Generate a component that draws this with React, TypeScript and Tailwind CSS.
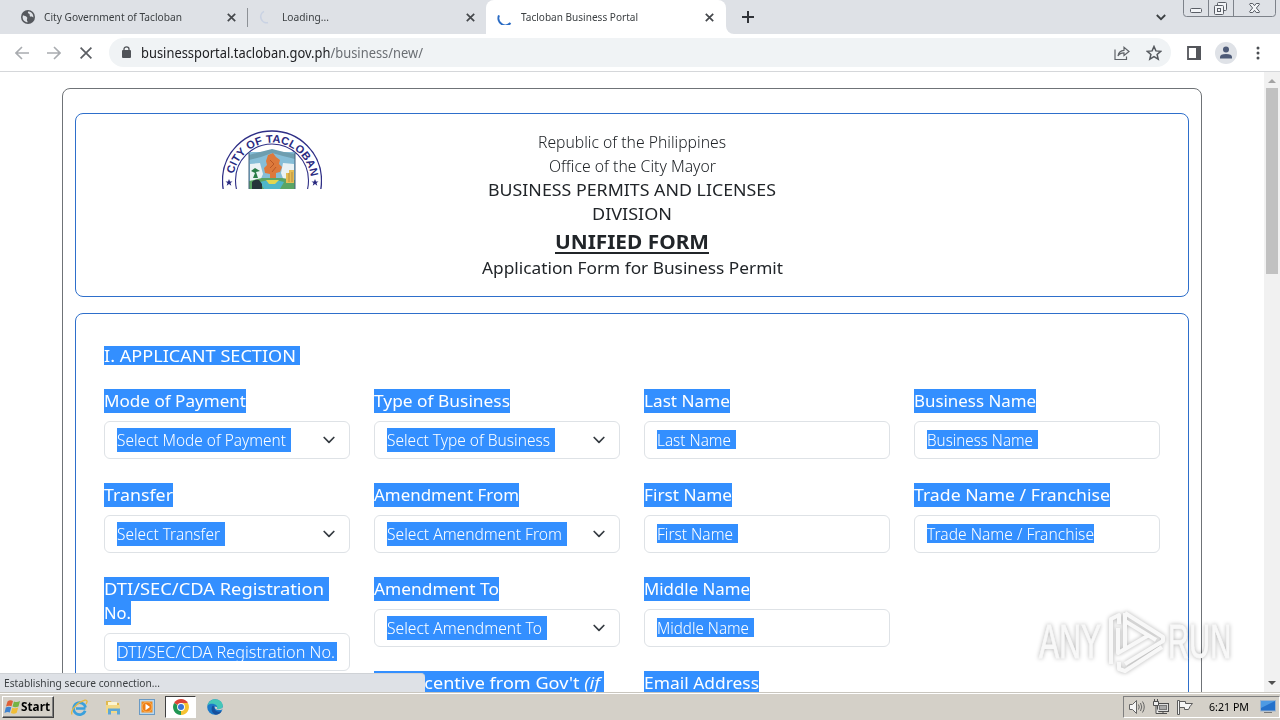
import { useLayoutEffect, useRef, type ReactNode } from "react";

/** One line of text, stretched so that it fills the content width of its box. */
function Fit({ className, children }: { className: string; children: ReactNode }) {
  const box = useRef<HTMLSpanElement>(null);
  const text = useRef<HTMLSpanElement>(null);
  useLayoutEffect(() => {
    const b = box.current;
    const t = text.current;
    if (!b || !t) return;
    t.style.transform = "none";
    const cs = getComputedStyle(b);
    const room = b.clientWidth - parseFloat(cs.paddingLeft) - parseFloat(cs.paddingRight);
    t.style.transform = `scaleX(${room / t.getBoundingClientRect().width})`;
  }, []);
  return (
    <span ref={box} className={`block shrink-0 whitespace-pre ${className}`}>
      <span ref={text} className="inline-block origin-left">{children}</span>
    </span>
  );
}

function CloseX() {
  return (
    <svg className="block h-[9px] w-[9px]" viewBox="0 0 9 9" stroke="#45484c" strokeWidth="1.7" fill="none">
      <path d="M0.8 0.8L8.2 8.2M8.2 0.8L0.8 8.2" />
    </svg>
  );
}

function TabStrip() {
  return (
    <div className="flex h-[34px] shrink-0 bg-[#dee1e6] text-[11.5px] leading-[34px] text-[#3c4043]">
      <div className="flex w-[247px] items-center pl-[21px]">
        <svg className="h-[14px] w-[14px]" viewBox="0 0 14 14">
          <circle cx="7" cy="7" r="7" fill="#55585d" />
          <path d="M2 5.2C3.8 6.2 5 5.8 6 7.2C6.8 8.4 5.5 9 6 10.4L6.8 12.3C3.8 12.4 1.6 9.8 1.6 7ZM7.2 1.6C6.2 3.4 7.6 3.6 8.4 4C9.2 4.6 8.2 5.8 9.4 6.6C10.4 7.4 11.4 6.8 12.4 7.4C12.4 3.6 9.6 1.5 7.2 1.6Z" fill="#dee1e6" />
        </svg>
        <Fit className="ml-[9px] w-[138px]">City Government of Tacloban</Fit>
        <div className="ml-[45px]"><CloseX /></div>
      </div>
      <div className="mt-[8px] h-[19px] w-px bg-[#8d9196]" />
      <div className="flex w-[238px] items-center pl-[11px]">
        <svg className="h-[14px] w-[14px]" viewBox="0 0 14 14" fill="none" stroke="#c9d2e3" strokeWidth="1.6">
          <path d="M5 1.4A6 6 0 0 0 9 12.6" />
        </svg>
        <Fit className="ml-[9px] w-[47px]">Loading...</Fit>
        <div className="ml-[137px]"><CloseX /></div>
      </div>
      <div className="flex w-[240px] items-center rounded-t-[8px] bg-white pl-[11px]">
        <svg className="h-[16px] w-[16px]" viewBox="0 0 16 16" fill="none" stroke="#2a6bc4" strokeWidth="2">
          <path d="M2 6.4A7 7 0 0 0 13.5 14" />
        </svg>
        <Fit className="ml-[8px] w-[117px]">Tacloban Business Portal</Fit>
        <div className="ml-[67px]"><CloseX /></div>
      </div>
      <div className="flex w-[430px] items-center bg-white">
        <div className="flex h-[34px] w-full items-center rounded-bl-[8px] bg-[#dee1e6] pl-[16px]">
          <svg className="h-[12px] w-[12px]" viewBox="0 0 12 12" stroke="#303338" strokeWidth="2">
            <path d="M6 0V12M0 6H12" />
          </svg>
        </div>
      </div>
      <div className="flex items-center bg-[#dee1e6]">
        <svg className="h-[7px] w-[10px]" viewBox="0 0 10 7" fill="none" stroke="#3c4043" strokeWidth="1.8">
          <path d="M0.8 1L5 5.2L9.2 1" />
        </svg>
      </div>
      <svg className="ml-[17px] h-[17px] w-[93px]" viewBox="0 0 93 17" fill="none" stroke="#7d828a">
        <path d="M0.5 0V13.5Q0.5 16.5 3.5 16.5H89.5Q92.5 16.5 92.5 13.5V0M25.5 0V16M50.5 0V16" />
        <g stroke="#5a5e66" fill="#f2f4f7">
          <rect x="7.5" y="8.5" width="11" height="4" rx="1" />
          <rect x="34.5" y="2.5" width="9" height="8" rx="1" />
          <rect x="31.5" y="5.5" width="9" height="9" rx="1" />
          <rect x="34.5" y="8.5" width="3" height="3" />
          <path d="M67 3.500H69.800L71.500 5.700L73.200 3.500H76.200L76.500 4.300L73.400 8L76.500 11.700L76.200 12.500H73.200L71.500 10.300L69.800 12.500H67L66.500 11.700L69.600 8L66.500 4.300Z" />
        </g>
      </svg>
    </div>
  );
}

function Toolbar() {
  return (
    <div className="flex h-[38px] shrink-0 items-center border-b border-[#d5d7da] bg-white pl-[15px]">
      <svg className="h-[14px] w-[14px]" viewBox="0 0 14 14" fill="none" stroke="#a9acb0" strokeWidth="1.6">
        <path d="M14 7H1.200M7 1L1 7L7 13" />
      </svg>
      <svg className="ml-[18px] h-[14px] w-[14px]" viewBox="0 0 14 14" fill="none" stroke="#a9acb0" strokeWidth="1.6">
        <path d="M0 7H12.800M7 1L13 7L7 13" />
      </svg>
      <svg className="ml-[19px] h-[12px] w-[12px]" viewBox="0 0 12 12" fill="none" stroke="#5b5e63" strokeWidth="1.7">
        <path d="M0.600 0.600L11.400 11.400M11.400 0.600L0.600 11.400" />
      </svg>
      <div className="ml-[17px] flex h-[29px] w-[1062px] items-center rounded-full bg-[#f0f3f5] pl-[13px]">
        <svg className="mb-[2px] h-[12px] w-[9px]" viewBox="0 0 9 12">
          <rect y="4" width="9" height="8" rx="1" fill="#505358" />
          <path d="M2 4.500V3A2.500 2.200 0 0 1 7 3V4.500" fill="none" stroke="#505358" strokeWidth="1.300" />
        </svg>
        <Fit className="ml-[10px] w-[282px] text-[14px] leading-[29px] text-[#202124]">
          businessportal.tacloban.gov.ph<span className="text-[#6a6e73]">/business/new/</span>
        </Fit>
        <svg className="ml-[691px] h-[16px] w-[16px]" viewBox="0 0 16 16" fill="none" stroke="#5f6368" strokeWidth="1.200">
          <path d="M1 4.500V14.500H12.500V11.500" />
          <path d="M4 11C4.500 7.500 6.500 5.500 10 5.300V2.300L15 6.500L10 10.500V7.900C7 7.900 5.300 8.800 4 11Z" />
        </svg>
        <svg className="ml-[16px] h-[16px] w-[16px]" viewBox="0 0 16 16" fill="none" stroke="#54585d" strokeWidth="1.500">
          <path d="M8 1.500L9.900 5.900L14.700 6.300L11.100 9.500L12.200 14.200L8 11.700L3.800 14.200L4.900 9.500L1.300 6.300L6.100 5.900Z" />
        </svg>
      </div>
      <svg className="ml-[16px] h-[14px] w-[14px]" viewBox="0 0 14 14">
        <path d="M1 1H13V13H1Z" fill="none" stroke="#54565b" strokeWidth="1.800" />
        <rect x="9" width="5" height="14" fill="#54565b" />
      </svg>
      <svg className="ml-[14px] h-[22px] w-[22px]" viewBox="0 0 22 22">
        <circle cx="11" cy="11" r="11" fill="#dfe2e7" />
        <circle cx="11" cy="7.500" r="3" fill="#4d5a77" />
        <path d="M5 16.500V15Q5 12 11 12Q17 12 17 15V16.500Z" fill="#4d5a77" />
      </svg>
      <svg className="ml-[19px] h-[14px] w-[4px]" viewBox="0 0 4 14" fill="#4b4e53">
        <circle cx="2" cy="2" r="1.500" />
        <circle cx="2" cy="7" r="1.500" />
        <circle cx="2" cy="12" r="1.500" />
      </svg>
    </div>
  );
}

function Seal() {
  return (
    <svg className="h-[59px] w-[100px]" viewBox="0 0 100 59">
      <g fill="none" stroke="#2f2f86">
        <circle cx="50" cy="50.500" r="49.500" strokeWidth="1.300" />
        <circle cx="50" cy="50.500" r="36.500" strokeWidth="1.100" />
      </g>
      <path id="sealText" d="M11.400 46A39 39 0 0 1 88.600 46" fill="none" />
      <text fill="#29297f" fontFamily="Liberation Sans, sans-serif" fontWeight="700" fontSize="11">
        <textPath href="#sealText" textLength="110" startOffset="2">CITY OF TACLOBAN</textPath>
      </text>
      <path d="M7 49L8 51.500H10.500L8.500 53L9.300 55.700L7 54.100L4.700 55.700L5.500 53L3.500 51.500H6Z" fill="#29297f" />
      <path d="M93 49L94 51.500H96.500L94.500 53L95.300 55.700L93 54.100L90.700 55.700L91.500 53L89.500 51.500H92Z" fill="#29297f" />
      <rect x="27" y="22" width="46" height="37" fill="#86bed7" />
      <path d="M27 25L38 22L50 19L62 22L73 24V29L61 26L50 23L39 27L27 30Z" fill="#6e9eaf" />
      <path d="M28 34L38 33L41 44L38 51H28ZM61 33L72 34V51H62L59 43Z" fill="#eaf2f4" />
      <path d="M46 25L51 23L54 27L58 30L57 34L60 37L58 42L54 43V49H48V44L43 43L42 38L45 35L44 31Z" fill="#dd793b" />
      <path d="M48 30L52 34L48 38M54 37L50 42" stroke="#b95725" fill="none" strokeWidth="1" />
      <path d="M27 51L40 48H60L73 50V59H27Z" fill="#5aa564" />
      <path d="M38 52Q50 48 62 52L58 59H42Z" fill="#4fb6c9" />
      <path d="M44 50H57L53 54H47Z" fill="#e2d651" />
      <path d="M29 41L33 38L38 41L34 42L36 48H31L33 43Z" fill="#2a7d48" />
      <path d="M30 59V52Q32 49 37 50L40 54V59Z" fill="#27343b" />
      <path d="M64 43H67V40H72V53H64Z" fill="#e5bd55" />
      <path d="M67 43V52M70 42V52" stroke="#b98d3f" />
      <path d="M27 22V59M73 22V59" stroke="#42607c" />
    </svg>
  );
}

function HeaderCard() {
  return (
    <div className="flex h-[184px] shrink-0 rounded-[8px] border border-[#2e6fcb] pt-[16px]">
      <div className="w-[393px] pl-[146px]"><Seal /></div>
      <div className="flex w-[326px] flex-col items-center text-[16px] leading-[24px] text-[#212529]">
        <Fit className="w-[188px] font-light">Republic of the Philippines</Fit>
        <Fit className="w-[167px] font-light">Office of the City Mayor</Fit>
        <Fit className="w-[288px] font-normal">BUSINESS PERMITS AND LICENSES</Fit>
        <Fit className="w-[80px] font-normal">DIVISION</Fit>
        <Fit className="h-[30px] w-[154px] text-[20px] leading-[31px] font-bold"><u className="decoration-2 underline-offset-[3px]">UNIFIED FORM</u></Fit>
        <Fit className="w-[301px] font-normal">Application Form for Business Permit</Fit>
      </div>
    </div>
  );
}

function Label({ w, children }: { w: string; children: ReactNode }) {
  return <Fit className={`h-[24px] bg-[#338fff] font-normal leading-[24px] text-white ${w}`}>{children}</Fit>;
}

function Select({ w, children }: { w: string; children: ReactNode }) {
  return (
    <div className="mt-[8px] mb-[24px] flex h-[38px] shrink-0 items-center justify-between rounded-[6px] border border-[#dee2e6] pr-[14px] pl-[12px]">
      <Fit className={`h-[24px] bg-[#338fff] pr-[5px] font-light leading-[24px] text-white ${w}`}>{children}</Fit>
      <svg className="h-[8px] w-[12px]" viewBox="0 0 12 8" fill="none" stroke="#343a40" strokeWidth="1.700" strokeLinecap="round" strokeLinejoin="round">
        <path d="M1.200 1.500L6 6.300L10.800 1.500" />
      </svg>
    </div>
  );
}

function Input({ w, children }: { w: string; children: ReactNode }) {
  return (
    <div className="mt-[8px] mb-[24px] flex h-[38px] shrink-0 items-start rounded-[6px] border border-[#dee2e6] pt-[8px] pl-[12px]">
      <Fit className={`h-[19px] bg-[#338fff] font-light leading-[20px] text-white ${w}`}>{children}</Fit>
    </div>
  );
}

function FormCard() {
  return (
    <div className="mt-[16px] flex h-[440px] shrink-0 flex-col rounded-t-[8px] border border-[#2e6fcb] px-[28px] pt-[32px] text-[16px]">
      <Fit className="h-[19px] w-[196px] bg-[#338fff] pr-[4px] leading-[20px] font-normal text-white">I. APPLICANT SECTION</Fit>
      <div className="mt-[24px] grid grid-cols-[246px_246px_246px_246px] gap-x-[24px]">
        <div className="flex flex-col">
          <Label w="w-[142px]">Mode of Payment</Label>
          <Select w="w-[174px]">Select Mode of Payment</Select>
          <Label w="w-[69px]">Transfer</Label>
          <Select w="w-[108px]">Select Transfer</Select>
          <Label w="w-[225px] pr-[5px]">DTI/SEC/CDA Registration</Label>
          <Label w="w-[27px]">No.</Label>
          <Input w="w-[220px] pr-[2px]">DTI/SEC/CDA Registration No.</Input>
        </div>
        <div className="flex flex-col">
          <Label w="w-[136px]">Type of Business</Label>
          <Select w="w-[168px]">Select Type of Business</Select>
          <Label w="w-[145px]">Amendment From</Label>
          <Select w="w-[180px]">Select Amendment From</Select>
          <Label w="w-[125px]">Amendment To</Label>
          <Select w="w-[160px]">Select Amendment To</Select>
          <Label w="w-[230px] pr-[4px]">Tax Incentive from Gov't <i>(if</i></Label>
        </div>
        <div className="flex flex-col">
          <Label w="w-[86px]">Last Name</Label>
          <Input w="w-[79px] pr-[5px]">Last Name</Input>
          <Label w="w-[88px]">First Name</Label>
          <Input w="w-[81px] pr-[5px]">First Name</Input>
          <Label w="w-[106px]">Middle Name</Label>
          <Input w="w-[97px] pr-[5px]">Middle Name</Input>
          <Label w="w-[115px]">Email Address</Label>
        </div>
        <div className="flex flex-col">
          <Label w="w-[122px]">Business Name</Label>
          <Input w="w-[111px] pr-[5px]">Business Name</Input>
          <Label w="w-[196px]">Trade Name / Franchise</Label>
          <Input w="w-[167px]">Trade Name / Franchise</Input>
        </div>
      </div>
    </div>
  );
}

function Scrollbar() {
  return (
    <div className="flex w-[16px] shrink-0 flex-col items-center justify-between bg-[#f1f1f1] pb-[7px]">
      <div className="flex flex-col items-center">
        <div className="flex h-[16px] items-center">
          <svg className="mt-[2px] h-[4px] w-[8px]" viewBox="0 0 8 4"><path d="M0 4L4 0L8 4Z" fill="#a3a3a3" /></svg>
        </div>
        <div className="h-[186px] w-[12px] bg-[#c1c1c1]" />
      </div>
      <svg className="h-[4px] w-[8px]" viewBox="0 0 8 4"><path d="M0 0L4 4L8 0Z" fill="#505050" /></svg>
    </div>
  );
}

function Watermark() {
  return (
    <svg className="absolute top-[604px] left-[1035px] h-[72px] w-[204px] drop-shadow-[0_0_2px_rgba(0,0,0,0.3)]" viewBox="0 0 204 72">
      <g fill="#f8f8f8" stroke="#f8f8f8" strokeWidth="0.800" fontFamily="Liberation Sans Narrow, Liberation Sans, sans-serif" fontSize="48">
        <text x="0" y="0" transform="translate(4 54) scale(0.640 1)" textLength="97" lengthAdjust="spacingAndGlyphs">ANY</text>
        <text x="0" y="0" transform="translate(133 54) scale(0.640 1)" textLength="99" lengthAdjust="spacingAndGlyphs">RUN</text>
      </g>
      <g fill="none" stroke="#f8f8f8" strokeWidth="4" strokeLinejoin="round">
        <path d="M76 60V15L84 11V20M90 9V45M90 9L128 33V37L90 60M90 17L121 36" />
        <path d="M83 24V49L90 45L114 31M84 58V65L90 67L127 43" />
      </g>
    </svg>
  );
}

function ChromeIcon() {
  return (
    <svg className="h-[16px] w-[16px]" viewBox="0 0 16 16">
      <path d="M8 8L1.100 4A8 8 0 0 1 14.900 4Z" fill="#dc4437" />
      <path d="M8 8L14.900 4A8 8 0 0 1 8 16Z" fill="#f6c231" />
      <path d="M8 8V16A8 8 0 0 1 1.100 4Z" fill="#219653" />
      <path d="M8 4H14.900L11.500 10L8 16L9 8Z" fill="#f6c231" />
      <circle cx="8" cy="8" r="3.900" fill="white" />
      <circle cx="8" cy="8" r="3" fill="#3974d8" />
    </svg>
  );
}

function Taskbar() {
  return (
    <div className="flex h-[26px] shrink-0 items-center bg-[#d4d0c8] pl-[2px]">
      <div className="flex h-[22px] w-[52px] items-center border border-t-white border-r-[#404040] border-b-[#404040] border-l-white pl-[1px] shadow-[inset_-1px_-1px_0_#808080]">
        <svg className="h-[16px] w-[17px]" viewBox="0 0 17 16">
          <path d="M3.500 2.500Q6 0.500 9 2L7.500 7.300Q5 6 2 7.500Z" fill="#df6037" />
          <path d="M10 2.500Q13 3.800 16 2L14.500 7.500Q11.500 9 8.500 7.600Z" fill="#75b344" />
          <path d="M1.800 8.500Q4.800 7 7.300 8.300L5.800 13.500Q3.500 12.400 0.500 14Z" fill="#3f83d0" />
          <path d="M8.300 8.700Q11.300 10 14.200 8.500L12.700 13.800Q10 15.500 6.900 14Z" fill="#f0bd37" />
        </svg>
        <Fit className="w-[29px] text-[11.5px] leading-[20px] font-bold text-black">Start</Fit>
      </div>
      <svg className="ml-[17px] h-[17px] w-[17px]" viewBox="0 0 17 17" fill="none">
        <path d="M14.500 9.500H5M14.200 11.800A6 6 0 1 1 14.500 8.500" stroke="#3ba0dc" strokeWidth="2.700" />
        <path d="M1 15.500C-1 11 7 3 14 1.200C16.500 0.800 16.600 2.800 15 5" stroke="#e6b840" strokeWidth="1.300" />
      </svg>
      <svg className="ml-[17px] h-[16px] w-[17px]" viewBox="0 0 17 16">
        <path d="M1 2H6L7 4H14V13H1Z" fill="#e0b94f" />
        <rect x="3" y="3" width="9" height="4" fill="#fbf5d2" />
        <path d="M1 6H15V14H1Z" fill="#f2d988" />
        <path d="M3 15.500V9.500H15V15.500H12V12H6V15.500Z" fill="#5ea7d6" />
      </svg>
      <svg className="ml-[17px] h-[16px] w-[16px]" viewBox="0 0 16 16">
        <rect x="0.500" y="0.500" width="15" height="15" fill="#b9d7ee" stroke="#6a9ac4" />
        <rect x="2.500" y="2.500" width="11" height="11" fill="#f28c1f" />
        <circle cx="8" cy="8" r="5" fill="#ee7d14" stroke="#f8b35e" />
        <path d="M6.500 4.800V11.200L11 8Z" fill="white" />
      </svg>
      <div className="ml-[10px] flex h-[22px] w-[31px] items-center justify-center border border-t-[#404040] border-r-white border-b-white border-l-[#404040] bg-white">
        <ChromeIcon />
      </div>
      <svg className="ml-[11px] h-[16px] w-[16px]" viewBox="0 0 16 16">
        <circle cx="8" cy="8" r="7.800" fill="#1c79c9" />
        <path d="M0.500 6.500C1.500 2.500 4.500 0.200 8 0.200C12.500 0.200 16 3.500 15.800 7C15.500 10 12 11 9.800 9.800C11 8.300 10 6 7.500 5.200C4.500 4.300 2 5 0.500 6.500Z" fill="#45c7b8" />
        <path d="M6 6.500C3 9 5 15 9 15.700C12 15.700 14 13.800 14.700 12C10 14 6.800 11 7.500 8Z" fill="#174f9c" />
        <path d="M7.700 7.500C7.200 9.500 9.500 12 14.500 10.800L15.900 10L15.800 8C15 10 11.800 10.700 9.800 9.800C10.200 9.200 10.300 8.500 10 8Z" fill="#d4d0c8" />
      </svg>
      <div className="ml-auto flex h-[22px] w-[157px] items-center border border-t-[#808080] border-r-white border-b-white border-l-[#808080] pl-[5px]">
        <svg className="h-[16px] w-[16px]" viewBox="0 0 16 16" fill="none" stroke="#646464">
          <path d="M0.500 5.500H3.500L7.500 1.500V14.500L3.500 10.500H0.500Z" fill="#f5f5f5" />
          <path d="M9.500 5.500Q11 8 9.500 10.500M11.500 4Q14 8 11.500 12M13.500 2.500Q17 8 13.500 13.500" />
        </svg>
        <svg className="ml-[8px] h-[16px] w-[16px]" viewBox="0 0 16 16" fill="none" stroke="#4e4e4e">
          <rect x="4.500" y="4.500" width="11" height="8" fill="#ddd" />
          <rect x="6.500" y="6.500" width="7" height="4" fill="#a8a8a8" stroke="#777" />
          <path d="M6 14.500H14M10 12V14" />
          <path d="M0.500 2.500H5.500V6.500H0.500ZM1.500 0V2M4.500 0V2M3 7V14.500H6" fill="#eee" />
        </svg>
        <svg className="ml-[8px] h-[16px] w-[16px]" viewBox="0 0 16 16" fill="#f5f5f5" stroke="#5c5c5c">
          <path d="M2.500 2.500H8.500V4.500H15.500L13 7.500L11.500 10.500H7.500V8.500H2.500" />
          <path d="M0.500 1.500H2.500V15.500H0.500Z" />
        </svg>
        <Fit className="ml-[16px] w-[40px] text-[11.5px] leading-[20px] text-black">6:21 PM</Fit>
        <svg className="ml-[11px] h-[14px] w-[16px]" viewBox="0 0 16 14">
          <rect x="0.500" y="0.500" width="15" height="10.500" fill="#2471cb" stroke="#9fb5cd" />
          <path d="M1 1H15L1 8Z" fill="#4d9ae3" />
          <path d="M4 12.500H12" stroke="#777" />
        </svg>
      </div>
    </div>
  );
}

export default function App() {
  return (
    <div className="relative flex h-[720px] w-[1280px] flex-col overflow-hidden bg-white font-['Noto_Sans',sans-serif]">
      <TabStrip />
      <Toolbar />
      <div className="flex h-[620px] shrink-0 overflow-hidden">
        <main className="w-[1264px] shrink-0 overflow-hidden pt-[16px] pl-[62px]">
          <div className="flex h-[640px] w-[1140px] flex-col rounded-t-[8px] border border-[#6f7377] px-[12px] pt-[24px]">
            <HeaderCard />
            <FormCard />
          </div>
        </main>
        <Scrollbar />
      </div>
      <div className="h-[2px] shrink-0 border-t border-[#c9c6bf] bg-white" />
      <Taskbar />
      <div className="absolute top-[673px] left-0 flex h-[19px] w-[425px] items-center rounded-tr-[4px] border-t border-[#cfd2d6] bg-[#dee1e6] pl-[4px]">
        <Fit className="w-[156px] text-[11.5px] leading-[18px] text-[#3c4043]">Establishing secure connection...</Fit>
      </div>
      <Watermark />
    </div>
  );
}
